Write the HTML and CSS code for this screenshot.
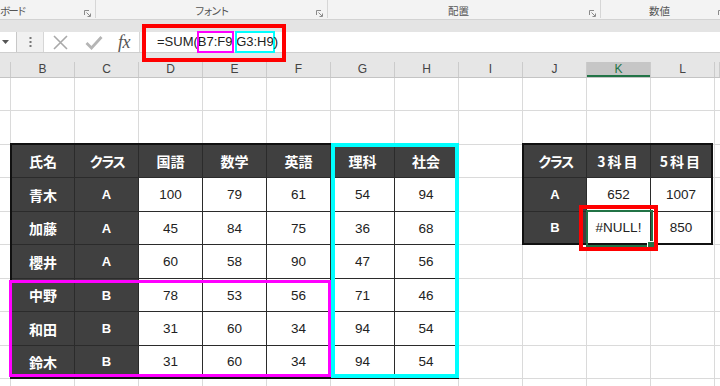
FILE: index.html
```html
<!DOCTYPE html>
<html lang="ja">
<head>
<meta charset="utf-8">
<title>SUM 交差演算子</title>
<link rel="stylesheet" href="styles.css">
</head>
<body>
<div class="app">
  <div class="top">
    <div class="ribbon">
      <div class="grp g1"><span class="glabel kana">ボード</span><svg class="launch" width="7" height="7" viewBox="0 0 7 7"><path d="M0.5 5V0.5H5" fill="none" stroke="#8a8a8a"/><path d="M2.5 2.5L6 6M6.5 3.5V6.5H3.5" fill="none" stroke="#8a8a8a"/></svg></div>
      <div class="grp g2"><span class="glabel kana">フォント</span><svg class="launch" width="7" height="7" viewBox="0 0 7 7"><path d="M0.5 5V0.5H5" fill="none" stroke="#8a8a8a"/><path d="M2.5 2.5L6 6M6.5 3.5V6.5H3.5" fill="none" stroke="#8a8a8a"/></svg></div>
      <div class="grp g3"><span class="glabel">配置</span><svg class="launch" width="7" height="7" viewBox="0 0 7 7"><path d="M0.5 5V0.5H5" fill="none" stroke="#8a8a8a"/><path d="M2.5 2.5L6 6M6.5 3.5V6.5H3.5" fill="none" stroke="#8a8a8a"/></svg></div>
      <div class="grp g4"><span class="glabel">数値</span><svg class="launch" width="7" height="7" viewBox="0 0 7 7"><path d="M0.5 5V0.5H5" fill="none" stroke="#8a8a8a"/><path d="M2.5 2.5L6 6M6.5 3.5V6.5H3.5" fill="none" stroke="#8a8a8a"/></svg></div>
    </div>
    <div class="band"></div>
    <div class="fbar">
      <div class="namebox"><svg width="7" height="4" viewBox="0 0 7 4"><path d="M0 0H7L3.5 4Z" fill="#555"/></svg></div>
      <div class="grip"><svg width="3" height="10" viewBox="0 0 3 10"><rect x="0.5" y="0" width="2" height="2" fill="#777"/><rect x="0.5" y="4" width="2" height="2" fill="#777"/><rect x="0.5" y="8" width="2" height="2" fill="#777"/></svg></div>
      <div class="fbtns">
        <svg class="ic-x" width="15" height="15" viewBox="0 0 15 15"><path d="M1 1L14 14M14 1L1 14" stroke="#a9a9a9" stroke-width="1.6" fill="none"/></svg>
        <svg class="ic-ok" width="18" height="15" viewBox="0 0 18 15"><path d="M1.5 8L6.5 13L16.5 2" stroke="#b5b5b5" stroke-width="2.8" fill="none"/></svg>
        <span class="fx">fx</span>
      </div>
      <div class="finput">=SUM(<span class="ref ref-m">B7:F9</span> <span class="ref ref-c">G3:H9</span>)</div>
    </div>
    <div class="colhead">
      <div class="ch"></div>
      <div class="ch">B</div>
      <div class="ch">C</div>
      <div class="ch">D</div>
      <div class="ch">E</div>
      <div class="ch">F</div>
      <div class="ch">G</div>
      <div class="ch">H</div>
      <div class="ch">I</div>
      <div class="ch">J</div>
      <div class="ch ch-on">K</div>
      <div class="ch">L</div>
      <div class="ch"></div>
    </div>
    <div class="redbox"></div>
  </div>

  <div class="sheet">
    <div class="t t1">
      <div class="c d h">氏名</div><div class="c d h kana">クラス</div><div class="c d h">国語</div><div class="c d h">数学</div><div class="c d h">英語</div><div class="c d h">理科</div><div class="c d h">社会</div>
      <div class="c d h">青木</div><div class="c d lt">A</div><div class="c">100</div><div class="c">79</div><div class="c">61</div><div class="c">54</div><div class="c">94</div>
      <div class="c d h">加藤</div><div class="c d lt">A</div><div class="c">45</div><div class="c">84</div><div class="c">75</div><div class="c">36</div><div class="c">68</div>
      <div class="c d h">櫻井</div><div class="c d lt">A</div><div class="c">60</div><div class="c">58</div><div class="c">90</div><div class="c">47</div><div class="c">56</div>
      <div class="c d h">中野</div><div class="c d lt">B</div><div class="c">78</div><div class="c">53</div><div class="c">56</div><div class="c">71</div><div class="c">46</div>
      <div class="c d h">和田</div><div class="c d lt">B</div><div class="c">31</div><div class="c">60</div><div class="c">34</div><div class="c">94</div><div class="c">54</div>
      <div class="c d h">鈴木</div><div class="c d lt">B</div><div class="c">31</div><div class="c">60</div><div class="c">34</div><div class="c">94</div><div class="c">54</div>
    </div>
    <div class="t t2">
      <div class="c d h kana">クラス</div><div class="c d h wide">3科目</div><div class="c d h wide">5科目</div>
      <div class="c d lt">A</div><div class="c">652</div><div class="c">1007</div>
      <div class="c d lt">B</div><div class="c">#NULL!</div><div class="c">850</div>
    </div>
    <div class="hl hl-m"></div>
    <div class="hl hl-c"></div>
    <div class="hl sel"></div>
    <div class="hl redsel"></div>
  </div>
</div>
</body>
</html>
```

FILE: styles.css
```css
* { box-sizing: border-box; }

body {
  margin: 0;
  width: 720px;
  height: 386px;
  overflow: hidden;
  background: #fff;
  font-family: "Liberation Sans", "Noto Sans CJK JP", sans-serif;
}

.app { width: 720px; height: 386px; overflow: hidden; }

.top { position: relative; }

/* ribbon */
.ribbon {
  display: flex;
  height: 20px;
  background: #f3f3f3;
  border-bottom: 1px solid #d2d2d2;
  overflow: hidden;
  font-family: "Noto Sans CJK JP", sans-serif;
  font-size: 10.5px;
  color: #555;
}
.grp {
  display: flex;
  align-items: flex-end;
  height: 18px;
  flex: none;
  border-right: 1px solid #d6d6d6;
}
.g1 { width: 96px; }
.g2 { width: 232px; padding-left: 10px; }
.g3 { width: 273px; }
.g4 { width: 128px; border-right: none; }
.glabel {
  flex: 1;
  text-align: center;
  line-height: 14px;
  white-space: nowrap;
}
.g1 .glabel { text-align: left; }
.kana { letter-spacing: -2.3px; }
.launch { flex: none; margin: 0 4px 1px 0; }

.band {
  height: 12px;
  background: #e4e4e4;
}

/* formula bar */
.fbar {
  display: flex;
  height: 21px;
  background: #f1f1f1;
  border-bottom: 1px solid #cfcfcf;
}
.namebox {
  width: 17px;
  background: #fff;
  border-right: 1px solid #c8c8c8;
  display: flex;
  align-items: center;
  padding-left: 2px;
}
.grip {
  width: 26px;
  display: flex;
  align-items: center;
  justify-content: center;
}
.fbtns {
  width: 97px;
  background: #fff;
  border-left: 1px solid #d6d6d6;
  border-right: 1px solid #d6d6d6;
  display: flex;
  align-items: center;
  padding-left: 9px;
}
.ic-x { margin-right: 17px; }
.ic-ok { margin-right: 15px; }
.fx {
  font-family: "Liberation Serif", serif;
  font-style: italic;
  font-size: 18px;
  color: #555;
  letter-spacing: -0.5px;
  line-height: 16px;
}
.finput {
  flex: 1;
  margin-left: 3px;
  background: #fff;
  border-left: 1px solid #d6d6d6;
  padding-left: 13px;
  font-size: 13px;
  line-height: 20px;
  color: #222;
  white-space: pre;
}
.ref {
  display: inline-block;
  vertical-align: top;
  height: 20px;
  outline-offset: -1px;
}
.ref-m { outline: 2px solid #ff00ff; }
.ref-c { outline: 2px solid #00ffff; }

/* column headers */
.colhead {
  display: grid;
  grid-template-columns: 11px repeat(11, 64px) 1fr;
  padding-top: 9px;
  background: #e6e6e6;
  border-bottom: 1px solid #c4c4c4;
}
.ch {
  height: 15px;
  line-height: 15px;
  text-align: center;
  font-size: 12px;
  color: #444;
  border-right: 1px solid #cbcbcb;
}
.ch-on {
  background: #c6c6c6;
  color: #217346;
  box-shadow: inset 0 -2px 0 #217346;
}

.redbox {
  position: absolute;
  left: 142px;
  top: 24px;
  width: 144px;
  height: 38px;
  border: 4px solid #ff0000;
}

/* sheet */
.sheet {
  display: grid;
  grid-template-columns: 11px repeat(11, 64px) 1fr;
  grid-template-rows: repeat(5, 33px 34px);
  height: 308px;
  overflow: hidden;
  background-image:
    linear-gradient(to right, transparent 63px, #dadada 63px),
    linear-gradient(to bottom, transparent 32px, #dadada 32px, #dadada 33px, transparent 33px, transparent 66px, #dadada 66px);
  background-size: 64px 100%, 100% 67px;
  background-position: 11px 0, 0 0;
}

.t {
  display: grid;
  gap: 1px;
  margin: -2px 0 0 -1px;
  border: 2px solid #111;
  background: #2b2b2b;
  z-index: 1;
}
.t1 {
  grid-column: 2 / 9;
  grid-row: 3 / 10;
  grid-template-columns: 62px repeat(5, 63px) 1fr;
  grid-template-rows: 32px 33px 32px 33px 32px 33px 1fr;
}
.t2 {
  grid-column: 10 / 13;
  grid-row: 3 / 6;
  margin-right: 2px;
  grid-template-columns: 62px 63px 1fr;
  grid-template-rows: 32px 33px 1fr;
}

.c {
  display: flex;
  align-items: center;
  justify-content: center;
  background: #fff;
  font-size: 13.5px;
  color: #222;
}
.d { background: #404040; color: #fff; }
.h {
  font-family: "Noto Sans CJK JP", sans-serif;
  font-weight: bold;
  font-size: 14px;
}
.h.kana { letter-spacing: -2.5px; }
.h.wide { letter-spacing: 2px; }
.lt { font-weight: bold; font-size: 13px; }

.hl { z-index: 2; pointer-events: none; }
.hl-m {
  grid-column: 2 / 7;
  grid-row: 7 / 10;
  margin: 1px 0 2px -2px;
  border: 3px solid #ff00ff;
}
.hl-c {
  grid-column: 7 / 9;
  grid-row: 3 / 10;
  margin: -2px 0 1px 0;
  border: 4px solid #00ffff;
}
.sel {
  grid-column: 11 / 12;
  grid-row: 5 / 6;
  margin: -2px -2px -2px -1px;
  border: 2px solid #217346;
  position: relative;
}
.sel::after {
  content: "";
  position: absolute;
  right: -4px;
  bottom: -4px;
  width: 6px;
  height: 6px;
  background: #217346;
  border: 1px solid #fff;
}
.redsel {
  grid-column: 11 / 12;
  grid-row: 5 / 6;
  margin: -7px -7px -6px -8px;
  border: 4px solid #ff0000;
  z-index: 3;
}
```
